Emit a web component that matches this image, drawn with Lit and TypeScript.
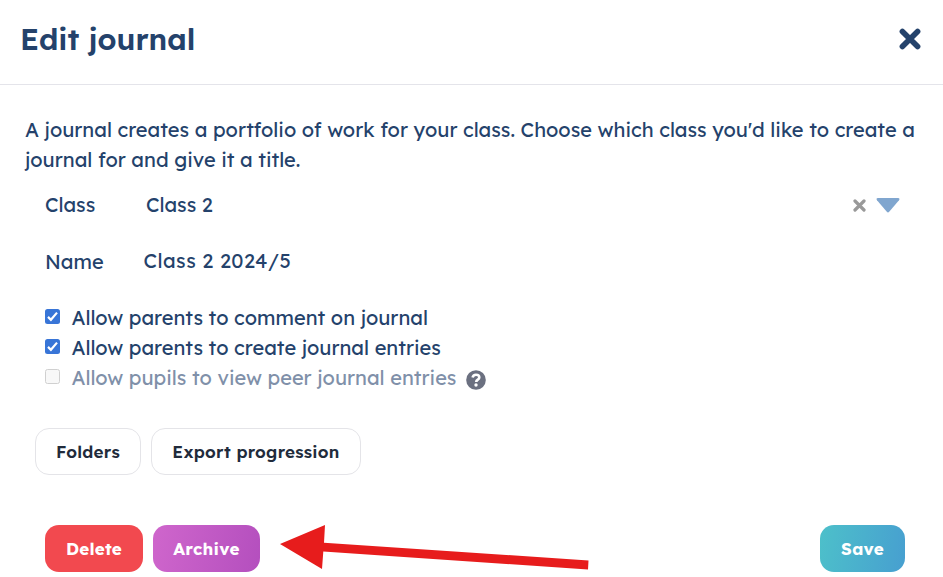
import { LitElement, html, css } from "lit";
import { customElement, property } from "lit/decorators.js";

@customElement("check-row")
class CheckRow extends LitElement {
  @property({ type: Boolean }) checked = false;
  @property({ type: Boolean }) disabled = false;
  static styles = css`
    :host { display: flex; height: 30px; align-items: flex-start; }
    .box { box-sizing: border-box; flex: none; width: 15px; height: 15px; margin-top: 6px; border-radius: 2.5px; background: #3875d7; }
    .off { background: #f8f8f8; border: 1px solid #d0d0d0; }
    .tick { display: block; width: 15px; height: 15px; }
    .text { margin-left: 11.5px; line-height: 30px; display: flex; white-space: nowrap; }
    .dim { color: #8090a9; }
  `;
  render() {
    return html`
      <span class="box ${this.checked ? "" : "off"}">${this.checked
        ? html`<svg class="tick" viewBox="0 0 15 15"><path d="M3 7.9 5.9 10.8 12 3.6" fill="none" stroke="#fff" stroke-width="2.2"/></svg>`
        : ""}</span>
      <span class="text ${this.disabled ? "dim" : ""}"><slot></slot></span>
    `;
  }
}

@customElement("app-root")
class AppRoot extends LitElement {
  static styles = css`
    :host { display: block; position: relative; width: 943px; height: 577px; overflow: hidden; background: #fff; color: #24426b;
      font-family: Lexend, Inter, "Noto Sans", sans-serif; font-size: 20px; line-height: 30px; }
    .header { box-sizing: border-box; height: 85px; border-bottom: 1px solid #e4e4ea; display: flex; justify-content: space-between; padding: 19px 22px 0 20px; }
    .title { margin: 0; font-size: 30px; line-height: 40px; font-weight: 600; }
    .close { width: 22px; height: 22px; margin-top: 9px; }
    .body { padding: 30px 25px 0; }
    .intro { margin: 0 0 15px; white-space: nowrap; }
    .row { display: flex; height: 30px; margin-left: 20px; }
    .label { width: 101px; }
    .name { margin-top: 27px; }
    .name .label { width: 98.5px; }
    .name .value { letter-spacing: 0.5px; margin-top: -1px; }
    .tools { margin-left: auto; display: flex; padding-right: 18.5px; }
    .clear { width: 13px; height: 13px; margin: 9px 10px 0 0; }
    .caret { width: 24px; height: 16px; margin: 7px 0 0; }
    .checks { margin: 26px 0 0 20px; }
    .help { width: 20px; height: 20px; margin: 7px 0 0 10px; }
    .buttons { display: flex; gap: 10px; margin: 35px 0 0 10px; }
    .footer { display: flex; gap: 10px; margin: 50px 13px 0 20px; }
    .btn { box-sizing: border-box; height: 47px; border: 0; padding: 0; border-radius: 14px; font: 600 17px/47px Lexend, Inter, sans-serif; letter-spacing: 0.25px; color: #fff; text-align: center; white-space: nowrap; }
    .plain { background: #fff; border: 1px solid #e4e4e8; color: #212b3b; line-height: 46px; }
    .folders { width: 106px; }
    .export { width: 210px; }
    .delete { width: 98px; background: #f2494f; font-weight: 700; }
    .archive { width: 107px; background: linear-gradient(100deg, #cf66cc, #b44fbe); font-weight: 700; }
    .save { width: 85px; margin-left: auto; background: linear-gradient(100deg, #4dc0ca, #479fd0); font-weight: 700; }
    .arrow { position: absolute; left: 270px; top: 515px; width: 330px; height: 62px; }
  `;
  render() {
    return html`
      <div class="header">
        <h1 class="title">Edit journal</h1>
        <svg class="close" viewBox="0 0 22 22"><path d="M3.4 3.4 18.6 18.6M18.6 3.4 3.4 18.6" stroke="#24426b" stroke-width="5.6" stroke-linecap="round"/></svg>
      </div>
      <div class="body">
        <p class="intro">A journal creates a portfolio of work for your class. Choose which class you'd like to create a<br>journal for and give it a title.</p>
        <div class="row">
          <span class="label">Class</span><span class="value">Class 2</span>
          <span class="tools">
            <svg class="clear" viewBox="0 0 13 13"><path d="M2 2 11 11M11 2 2 11" stroke="#999" stroke-width="3.2" stroke-linecap="round"/></svg>
            <svg class="caret" viewBox="0 0 24 16"><path d="M2 1H22Q24.3 1 23 3.2L13.2 14.8Q12 16 10.8 14.8L1 3.2Q-.3 1 2 1Z" fill="#80a6cf"/></svg>
          </span>
        </div>
        <div class="row name"><span class="label">Name</span><span class="value">Class 2 2024/5</span></div>
        <div class="checks">
          <check-row checked>Allow parents to comment on journal</check-row>
          <check-row checked>Allow parents to create journal entries</check-row>
          <check-row disabled>Allow pupils to view peer journal entries<svg class="help" viewBox="0 0 20 20"><circle cx="10" cy="10" r="9.8" fill="#6b7080"/><path d="M6.6 7.6C7 5.4 8.2 4.7 10 4.7 12 4.7 13.3 5.8 13.3 7.4 13.3 9.8 10.2 9.5 10.2 12" fill="none" stroke="#fff" stroke-width="2.6"/><circle cx="10" cy="15" r="1.7" fill="#fff"/></svg></check-row>
        </div>
        <div class="buttons">
          <button class="btn plain folders">Folders</button><button class="btn plain export">Export progression</button>
        </div>
        <div class="footer">
          <button class="btn delete">Delete</button><button class="btn archive">Archive</button><button class="btn save">Save</button>
        </div>
      </div>
      <svg class="arrow" viewBox="270 515 330 62"><path d="M280 544 325 525 324 542.7 588.5 560.5 588 569.5 323.3 551.5 322 569Z" fill="#e71c1c"/></svg>
    `;
  }
}
